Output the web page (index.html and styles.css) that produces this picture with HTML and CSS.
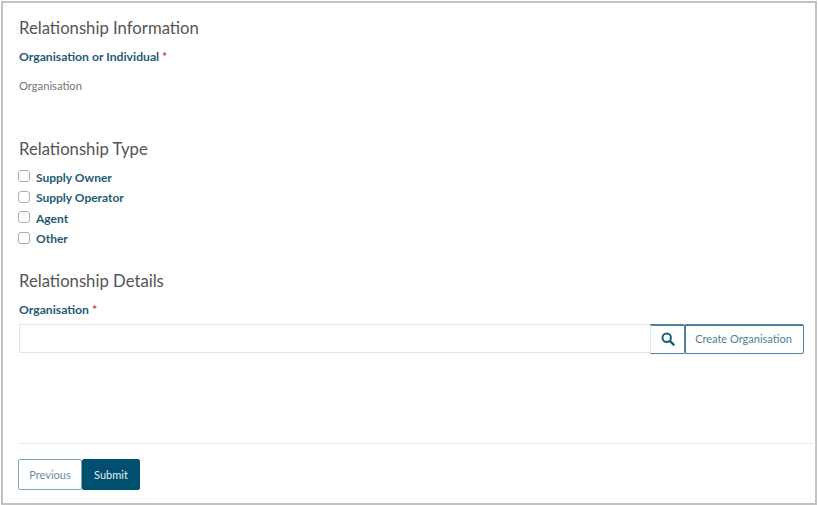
FILE: index.html
```html
<!DOCTYPE html>
<html lang="en">
<head>
  <meta charset="UTF-8">
  <title>Relationship</title>
  <link rel="stylesheet" href="styles.css">
</head>
<body>
  <div class="frame">
    <h2 class="heading first">Relationship Information</h2>
    <div class="label">Organisation or Individual <span class="req">*</span></div>
    <div class="value">Organisation</div>

    <h2 class="heading type">Relationship Type</h2>
    <div class="checks">
      <label class="check"><span class="box"></span>Supply Owner</label>
      <label class="check"><span class="box"></span>Supply Operator</label>
      <label class="check"><span class="box"></span>Agent</label>
      <label class="check"><span class="box"></span>Other</label>
    </div>

    <h2 class="heading details">Relationship Details</h2>
    <div class="label org">Organisation <span class="req">*</span></div>
    <div class="search-row">
      <div class="search-input"></div>
      <button class="btn icon-btn" type="button">
        <svg width="14" height="14" viewBox="0 0 14 14"><circle cx="5.7" cy="5.7" r="4.2" fill="none" stroke="#14607c" stroke-width="2"/><path d="M8.9 8.9L12.6 12.6" stroke="#14607c" stroke-width="2.4" stroke-linecap="round"/></svg>
      </button>
      <button class="btn create-btn" type="button">Create Organisation</button>
    </div>

    <div class="footer">
      <button class="btn prev-btn" type="button">Previous</button>
      <button class="btn submit-btn" type="button">Submit</button>
    </div>
  </div>
</body>
</html>
```

FILE: styles.css
```css
* {
  box-sizing: border-box;
}

body {
  margin: 0;
  width: 818px;
  height: 505px;
  overflow: hidden;
  background-color: #fff;
  font-family: "Lato", "Open Sans", sans-serif;
}

.frame {
  height: 504px;
  margin-top: 1px;
  margin-left: 1px;
  width: 816px;
  border: 2px solid #c2c2c2;
  padding: 0 0 0 16px;
  display: flex;
  flex-direction: column;
}

.heading {
  margin: 0;
  font-size: 16.7px;
  font-weight: 400;
  line-height: 20px;
  color: #555;
}

.first {
  margin-top: 15px;
}

.type {
  margin-top: 46px;
}

.details {
  margin-top: 25px;
}

.label {
  margin-top: 12px;
  font-size: 12.2px;
  font-weight: 700;
  line-height: 14px;
  color: #1f5a75;
}

.req {
  color: #c8404a;
}

.value {
  margin-top: 15px;
  font-size: 11.2px;
  line-height: 14px;
  color: #757575;
}

.checks {
  margin-top: 11px;
  display: flex;
  flex-direction: column;
  gap: 6.1px;
}

.check {
  display: flex;
  align-items: center;
  gap: 6px;
  height: 14.4px;
  font-size: 12px;
  font-weight: 700;
  color: #1f5a75;
}

.box {
  width: 12px;
  height: 12px;
  margin-top: -2px;
  margin-left: -1px;
  background-color: #fff;
  border: 1px solid #b0b0b0;
  border-radius: 3px;
}

.org {
  margin-top: 12px;
}

.search-row {
  display: flex;
  margin-top: 7px;
  width: 785px;
  height: 30px;
}

.search-input {
  flex: 1;
  height: 29px;
  border: 1px solid #e4e4e4;
  border-right: none;
  background-color: #fff;
}

.btn {
  font-family: inherit;
  font-size: 11px;
  background-color: #fff;
  border: 1px solid #4f8299;
  border-radius: 2px;
  padding: 0;
  color: #4f7f96;
}

.icon-btn {
  width: 34px;
  border-left-color: #e4e4e4;
  border-top-width: 2px;
  border-right: none;
  border-radius: 0;
  display: flex;
  align-items: center;
  justify-content: center;
}

.create-btn {
  width: 120px;
  border-left-width: 2px;
  border-top-width: 2px;
  padding-right: 2px;
  padding-bottom: 1px;
}

.footer {
  margin-top: 89px;
  margin-right: -1px;
  padding-top: 15px;
  border-top: 1px solid #ececec;
  display: flex;
}

.prev-btn {
  width: 64px;
  height: 31px;
  margin-left: -1px;
  color: #6a8fa3;
  border-color: #7fa6b8;
}

.submit-btn {
  width: 58px;
  height: 31px;
  background-color: #004f6e;
  border-color: #004f6e;
  color: #e4eef2;
}
```
